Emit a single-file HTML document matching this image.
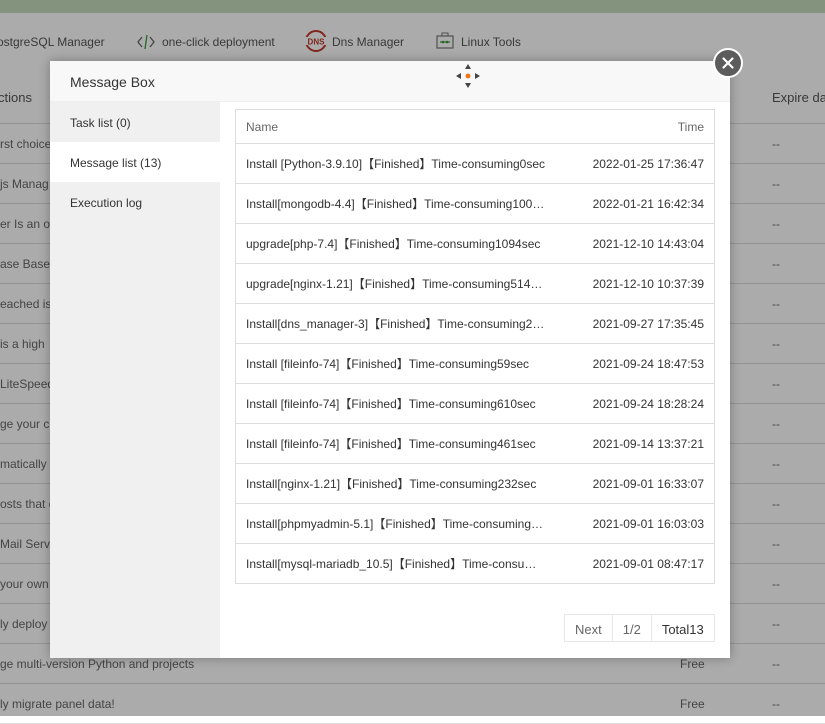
<!DOCTYPE html>
<html><head><style>
*{margin:0;padding:0;box-sizing:border-box}
body{width:825px;height:716px;overflow:hidden;position:relative;font-family:"Liberation Sans",sans-serif;font-size:12px;color:#333;background:#fff}
.top{position:absolute;left:0;top:0;width:825px;height:13px;background:#c3dcbd}
.nav{position:absolute;left:0;top:13px;width:825px;height:58px;background:#fff;font-size:12px;color:#555}
.nav span{position:absolute;top:22px;white-space:nowrap}
.bg{position:absolute;left:0;top:71px;width:825px}
.r{position:relative;height:40px;border-bottom:1px solid #ddd;font-size:12px;color:#666;white-space:nowrap}
.r span{position:absolute;top:13px}
.ov{position:absolute;inset:0;background:rgba(0,0,0,0.33)}
.m{position:absolute;left:50px;top:61px;width:680px;height:597px;background:#fff;box-shadow:0 0 10px rgba(0,0,0,.3)}
.mh{height:41px;background:#f8f8f8;border-bottom:1px solid #eee;padding:13px 20px;font-size:14px;color:#333}
.sb{position:absolute;left:0;top:41px;width:170px;bottom:0;background:#f0f0f0}
.sb div{height:40px;padding:14px 20px;font-size:12px;color:#333}
.sb .a{background:#fff}
table{position:absolute;left:185px;top:48px;width:480px;border-collapse:collapse;border:1px solid #ddd}
td,th{height:40px;border-bottom:1px solid #ddd;padding:0 10px;font-size:12px;font-weight:normal;text-align:left;white-space:nowrap}
tr{height:40px}
th{color:#666;font-size:12px}
td.t,th.t{text-align:right}
.pg{position:absolute;left:514px;top:553px;height:28px;display:flex;border:1px solid #e6e6e6;font-size:13px}
.pg div{padding:7px 10px;border-right:1px solid #e6e6e6;color:#666}
.pg div:last-child{border:0;color:#333}
.x{position:absolute;left:713px;top:48px;width:30px;height:30px;border-radius:50%;background:#5c5c5c;border:2px solid #fff}
</style></head><body>
<div class="top"></div>
<div class="nav">
<span style="left:-3px">ostgreSQL Manager</span>
<svg style="position:absolute;left:137px;top:21px" width="18" height="16" viewBox="0 0 18 16"><path d="M5 3L1 8l4 5M13 3l4 5-4 5" stroke="#666" fill="none" stroke-width="1.3"/><path d="M10 1L8 15" stroke="#3a9a3a" stroke-width="1.3"/></svg>
<span style="left:162px">one-click deployment</span>
<svg style="position:absolute;left:305px;top:17px" width="22" height="22" viewBox="0 0 22 22"><circle cx="11" cy="11" r="10" fill="none" stroke="#c0392b" stroke-width="2"/><rect x="0" y="7" width="22" height="8" fill="#fff"/><text x="11" y="14.5" font-size="8" font-weight="bold" fill="#c0392b" text-anchor="middle" font-family="Liberation Sans">DNS</text></svg>
<span style="left:332px">Dns Manager</span>
<svg style="position:absolute;left:436px;top:18px" width="18" height="18" viewBox="0 0 18 18"><rect x="1" y="5" width="16" height="12" fill="none" stroke="#777" stroke-width="1.2"/><path d="M6 5V2h6v3" fill="none" stroke="#777"/><path d="M4 11h10" stroke="#3a9a3a" stroke-width="1.2"/><circle cx="7" cy="11" r="1.3" fill="#3a9a3a"/><circle cx="11" cy="11" r="1.3" fill="#3a9a3a"/></svg>
<span style="left:461px">Linux Tools</span>
</div>
<div class="bg">
<div class="r" style="height:53px;background:#fff"><span style="left:-2px;top:19px;font-size:13px;color:#555">ctions</span><span style="left:772px;top:19px;font-size:13px;color:#555">Expire da</span></div>
<div class="r"><span style="left:0">rst choice</span><span style="left:772px">--</span></div>
<div class="r"><span style="left:0">js Manag</span><span style="left:772px">--</span></div>
<div class="r"><span style="left:0">er Is an op</span><span style="left:772px">--</span></div>
<div class="r"><span style="left:0">ase Base</span><span style="left:772px">--</span></div>
<div class="r"><span style="left:0">eached is</span><span style="left:772px">--</span></div>
<div class="r"><span style="left:0">is a high</span><span style="left:772px">--</span></div>
<div class="r"><span style="left:0">LiteSpeed</span><span style="left:772px">--</span></div>
<div class="r"><span style="left:0">ge your cl</span><span style="left:772px">--</span></div>
<div class="r"><span style="left:0">matically u</span><span style="left:772px">--</span></div>
<div class="r"><span style="left:0">osts that c</span><span style="left:772px">--</span></div>
<div class="r"><span style="left:0">Mail Serve</span><span style="left:772px">--</span></div>
<div class="r"><span style="left:0">your own</span><span style="left:772px">--</span></div>
<div class="r"><span style="left:0">ly deploy</span><span style="left:772px">--</span></div>
<div class="r"><span style="left:0">ge multi-version Python and projects</span><span style="left:680px">Free</span><span style="left:772px">--</span></div>
<div class="r"><span style="left:0">ly migrate panel data!</span><span style="left:680px">Free</span><span style="left:772px">--</span></div>
</div>
<div class="ov"></div>
<div class="m">
<div class="mh">Message Box</div>
<svg style="position:absolute;left:405px;top:2px" width="26" height="26" viewBox="0 0 26 26"><path d="M13 1l-3 5h6zM13 25l-3-5h6zM1 13l5-3v6zM25 13l-5-3v6z" fill="#444"/><circle cx="13" cy="13" r="2.5" fill="#f07818"/></svg>
<div class="sb"><div>Task list (0)</div><div class="a">Message list (13)</div><div>Execution log</div></div>
<table>
<tr style="height:34px"><th style="height:33px">Name</th><th class="t" style="height:33px">Time</th></tr>
<tr><td>Install [Python-3.9.10]【Finished】Time-consuming0sec</td><td class="t">2022-01-25 17:36:47</td></tr>
<tr><td>Install[mongodb-4.4]【Finished】Time-consuming100…</td><td class="t">2022-01-21 16:42:34</td></tr>
<tr><td>upgrade[php-7.4]【Finished】Time-consuming1094sec</td><td class="t">2021-12-10 14:43:04</td></tr>
<tr><td>upgrade[nginx-1.21]【Finished】Time-consuming514…</td><td class="t">2021-12-10 10:37:39</td></tr>
<tr><td>Install[dns_manager-3]【Finished】Time-consuming2…</td><td class="t">2021-09-27 17:35:45</td></tr>
<tr><td>Install [fileinfo-74]【Finished】Time-consuming59sec</td><td class="t">2021-09-24 18:47:53</td></tr>
<tr><td>Install [fileinfo-74]【Finished】Time-consuming610sec</td><td class="t">2021-09-24 18:28:24</td></tr>
<tr><td>Install [fileinfo-74]【Finished】Time-consuming461sec</td><td class="t">2021-09-14 13:37:21</td></tr>
<tr><td>Install[nginx-1.21]【Finished】Time-consuming232sec</td><td class="t">2021-09-01 16:33:07</td></tr>
<tr><td>Install[phpmyadmin-5.1]【Finished】Time-consuming…</td><td class="t">2021-09-01 16:03:03</td></tr>
<tr><td>Install[mysql-mariadb_10.5]【Finished】Time-consu…</td><td class="t">2021-09-01 08:47:17</td></tr>
</table>
<div class="pg"><div>Next</div><div>1/2</div><div>Total13</div></div>
</div>
<div class="x"><svg width="26" height="26" viewBox="0 0 26 26" style="display:block"><path d="M8.5 8.5l9 9M17.5 8.5l-9 9" stroke="#fff" stroke-width="2.2" stroke-linecap="round"/></svg></div>
</body></html>
